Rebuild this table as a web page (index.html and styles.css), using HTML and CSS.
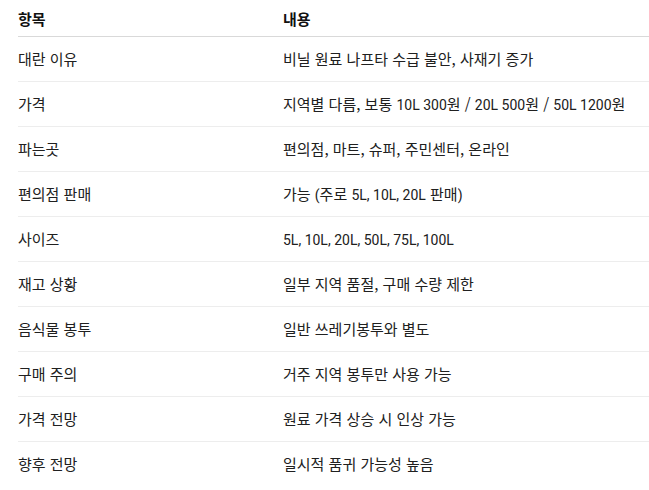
FILE: index.html
```html
<!DOCTYPE html>
<html lang="ko">
<head>
<meta charset="utf-8">
<link rel="stylesheet" href="styles.css">
</head>
<body>
<table class="info">
  <thead>
    <tr><th class="col-key">항목</th><th>내용</th></tr>
  </thead>
  <tbody>
    <tr><td>대란 이유</td><td>비닐 원료 나프타 수급 불안, 사재기 증가</td></tr>
    <tr><td>가격</td><td>지역별 다름, 보통 <span class="en">10L 300</span>원 / <span class="en">20L 500</span>원 / <span class="en">50L 1200</span>원</td></tr>
    <tr><td>파는곳</td><td>편의점, 마트, 슈퍼, 주민센터, 온라인</td></tr>
    <tr><td>편의점 판매</td><td>가능 <span class="en">(</span>주로 <span class="en">5L, 10L, 20L</span> 판매<span class="en">)</span></td></tr>
    <tr><td>사이즈</td><td><span class="en">5L, 10L, 20L, 50L, 75L, 100L</span></td></tr>
    <tr><td>재고 상황</td><td>일부 지역 품절, 구매 수량 제한</td></tr>
    <tr><td>음식물 봉투</td><td>일반 쓰레기봉투와 별도</td></tr>
    <tr><td>구매 주의</td><td>거주 지역 봉투만 사용 가능</td></tr>
    <tr><td>가격 전망</td><td>원료 가격 상승 시 인상 가능</td></tr>
    <tr><td>향후 전망</td><td>일시적 품귀 가능성 높음</td></tr>
  </tbody>
</table>
</body>
</html>
```
FILE: styles.css
```css
html, body {
  margin: 0;
  padding: 0;
  background: #ffffff;
}
body {
  padding-left: 18px;
  font-family: "Noto Sans CJK KR", "Noto Sans", sans-serif;
  font-size: 15px;
  color: #202020;
}
.en {
  font-family: Roboto, "Noto Sans CJK KR", sans-serif;
  font-size: 14px;
  line-height: 1;
}
.info {
  border-collapse: collapse;
  width: 631px;
  table-layout: fixed;
}
.info th, .info td {
  text-align: left;
  line-height: 20px;
  vertical-align: top;
  white-space: nowrap;
}
.info th {
  font-weight: 700;
  color: #111111;
  padding: 9px 0 7px;
  border-bottom: 1px solid #d9d9d9;
}
.col-key {
  width: 265px;
}
.info td {
  padding: 12px 0;
  border-bottom: 1px solid #ededed;
}
.info tbody tr:last-child td {
  border-bottom: none;
}
```
